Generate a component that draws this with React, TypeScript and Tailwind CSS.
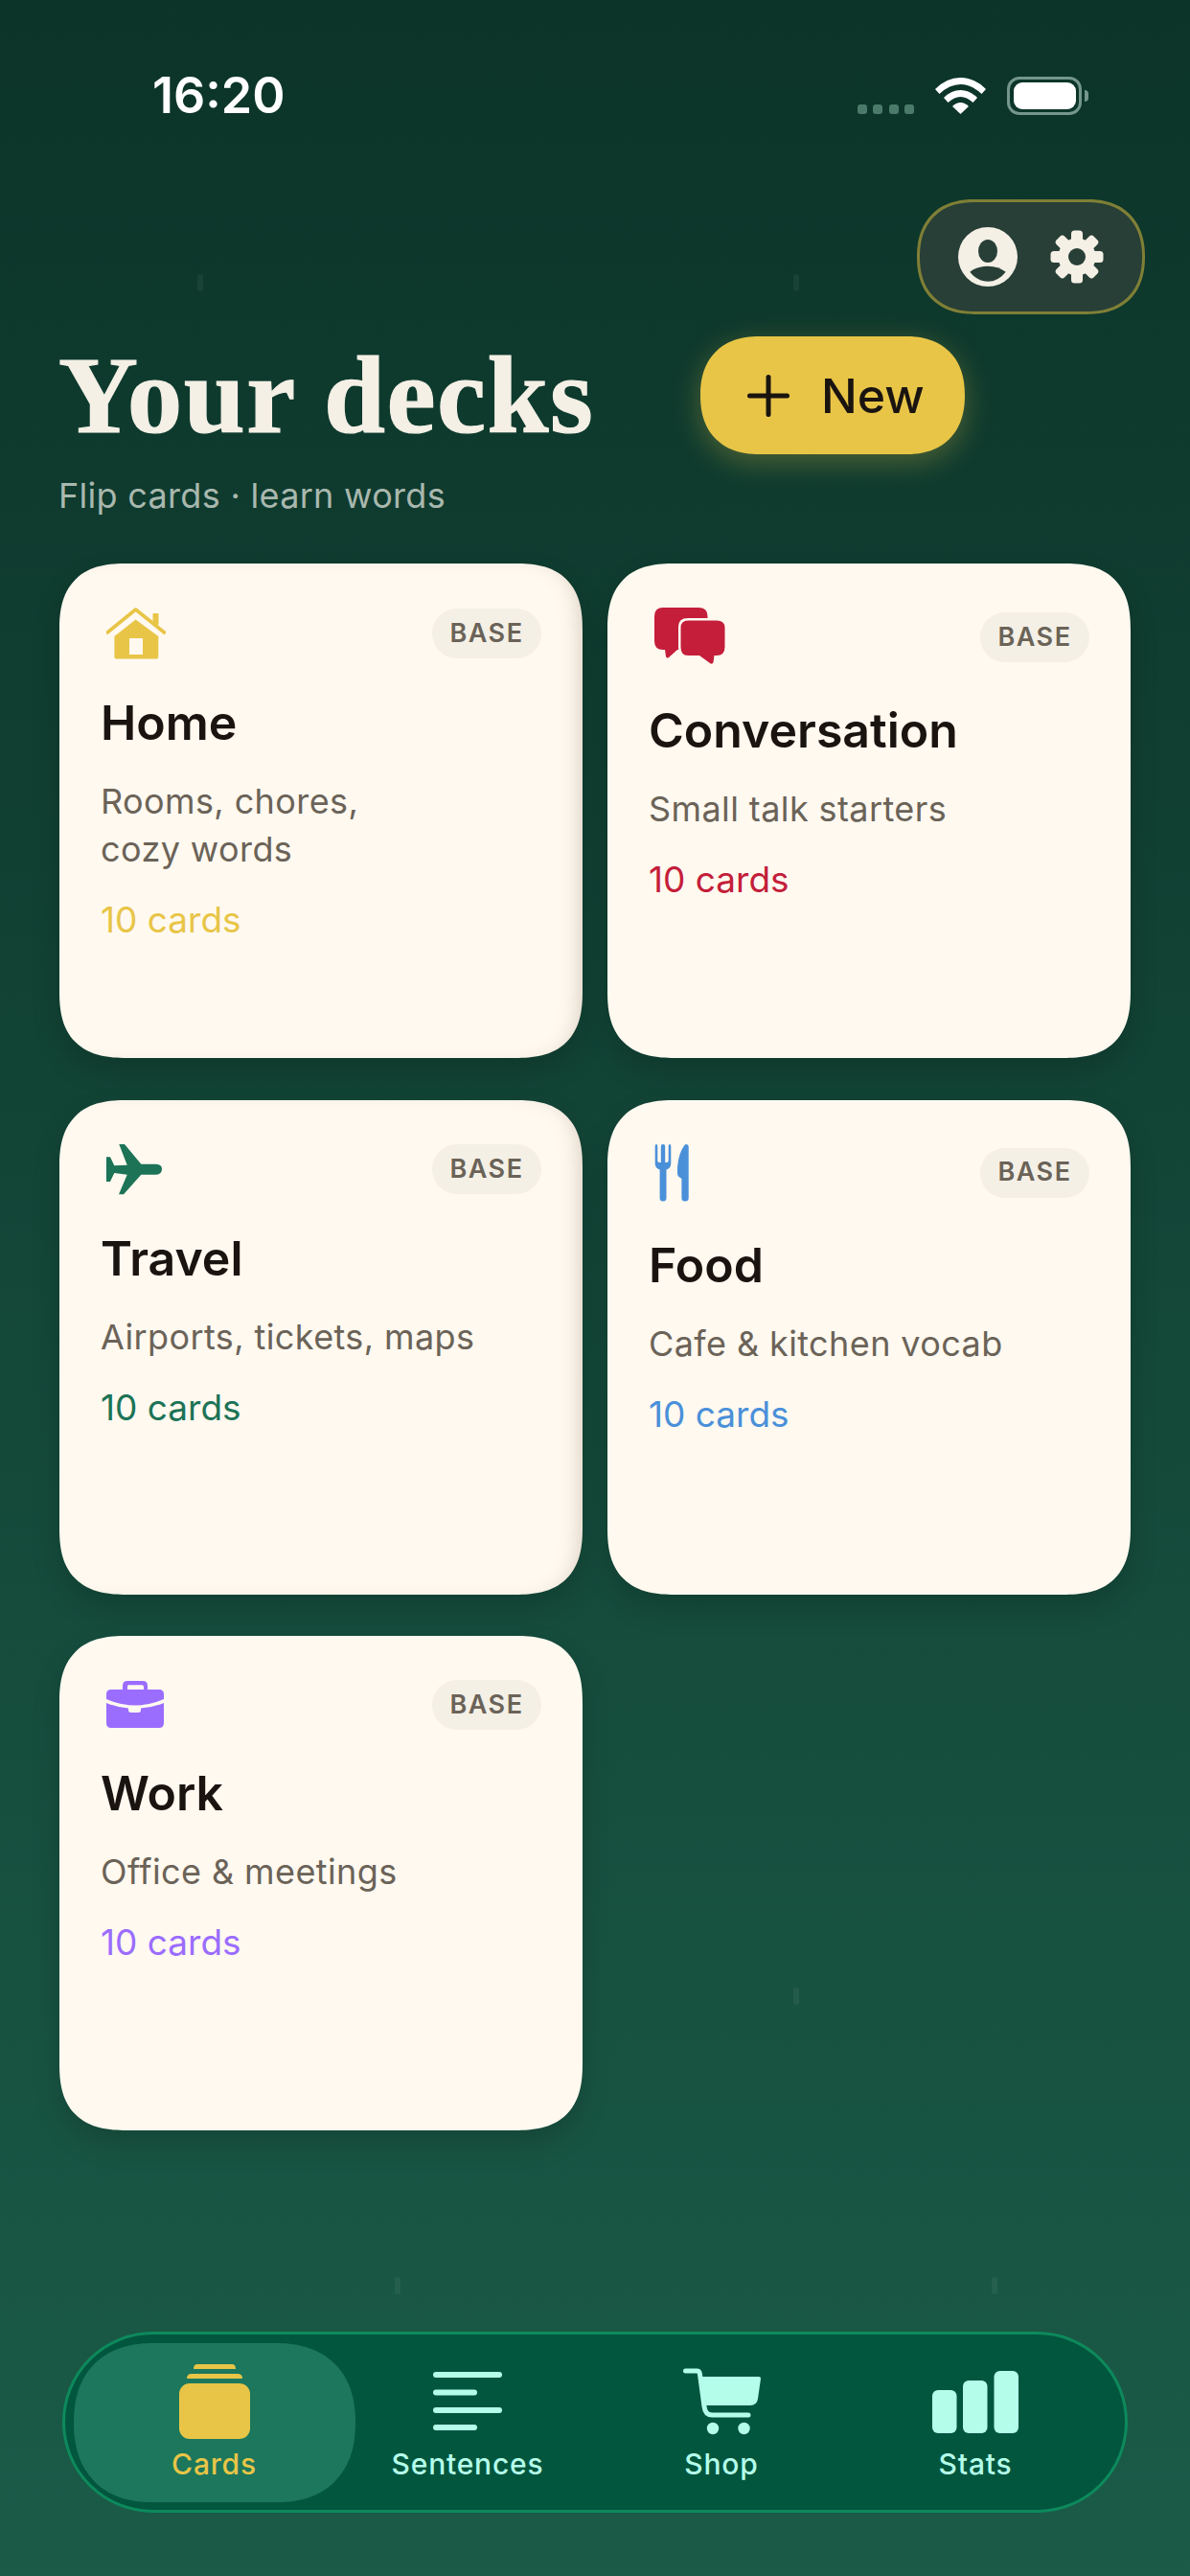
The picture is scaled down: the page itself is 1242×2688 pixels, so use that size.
import React from 'react';

const HomeIcon = () => (
  <svg width="62" height="54" viewBox="0 0 62 54" fill="#e8c547">
    <path d="M1 26 L30.6 2 L60.5 26" fill="none" stroke="#e8c547" strokeWidth="3.6" strokeLinecap="round" strokeLinejoin="round" />
    <rect x="48.5" y="6" width="6" height="12" rx="1" />
    <path fillRule="evenodd" d="M30.6 12.5 L54.3 30 V51 Q54.3 53.6 51.5 53.6 H11 Q8.4 53.6 8.4 51 V30 Z M24 32 V49 H38 V32 Z" />
  </svg>
);

const ChatIcon = () => (
  <svg width="74" height="62" viewBox="0 0 74 62" fill="#c41e3a">
    <path d="M9 0 H46 Q55.5 0 55.5 9 V36 Q55.5 44 47 44 H24 L15 52 Q13 53.5 12 51 L11 44 H9 Q0 44 0 35 V9 Q0 0 9 0 Z" />
    <path d="M35 11 H65 Q76 11 76 20 V41 Q76 52 65 52 H62 L60 60 L47 52 H35 Q25 52 25 41 V20 Q25 11 35 11 Z" fill="#fff9f0" />
    <path d="M35 13.5 H65 Q73.5 13.5 73.5 21 V41 Q73.5 50 65 50 H62.5 L61.5 57 Q60.5 60 58 58 L47 50 H35 Q27.5 50 27.5 41 V21 Q27.5 13.5 35 13.5 Z" />
  </svg>
);

const PlaneIcon = () => (
  <svg width="58" height="53" viewBox="0 0 58 53" fill="#1c7356">
    <path d="M13.3 0 H19 L36.3 20.7 H52 Q58 21 58 26 Q58 31.4 52 31.7 H36.3 L18 52.3 H13 L21.7 31.7 L8.3 30 L4 39 H0 V13.3 H4 L8.3 22.3 L21.7 21.7 Z" />
  </svg>
);

const FoodIcon = () => (
  <svg width="36" height="60" viewBox="0 0 36 60" fill="#4a90d9">
    <path d="M0.7 2 Q0.7 0 2 0 Q3.3 0 3.3 2 V17 Q3.3 19 5 19 H6.8 V2 Q6.8 0 9 0 Q11.2 0 11.2 2 V19 H13 Q14.7 19 14.7 17 V2 Q14.7 0 16 0 Q17.3 0 17.3 2 V20 Q17.3 25 12.5 26.5 V56 Q12.5 59.5 9 59.5 Q5.6 59.5 5.6 56 V26.5 Q0.7 25 0.7 20 Z" />
    <path d="M33 0 Q35.7 0 35.7 3 V56 Q35.7 59.5 32 59.5 Q28.4 59.5 28.4 56 V36 L25 33.5 Q24 32.5 24 30 V24 Q25 10 31 1.5 Q32 0 33 0 Z" />
  </svg>
);

const WorkIcon = () => (
  <svg width="60" height="50" viewBox="0 0 60 50" fill="#9b6dff">
    <path fillRule="evenodd" d="M22 0 H38 Q43 0 43 5 V9 H39 V6 Q39 4.3 37 4.3 H23 Q22 4.3 22 6 V9 H17 V5 Q17 0 22 0 Z" />
    <path d="M5 9 H55 Q60 9 60 14 V19 Q45 25.5 30 25.5 Q15 25.5 0 19 V14 Q0 9 5 9 Z" />
    <path d="M0 23 Q11 27.5 23 28.5 V30.5 Q23 33 26 33 H33 Q36 33 36 30.5 V28.5 Q49 27.5 60 23 V44 Q60 49 55 49 H5 Q0 49 0 44 Z" />
  </svg>
);

const ProfileIcon = () => (
  <svg width="62" height="62" viewBox="0 0 62 62">
    <circle cx="31" cy="31" r="31" fill="#f4f0e6" />
    <ellipse cx="31" cy="25" rx="10" ry="12" fill="#283f37" />
    <path d="M12.3 46.7 Q20 40.7 31 40.7 Q42 40.7 49.7 46.7 Q42 56.7 31 56.7 Q20 56.7 12.3 46.7 Z" fill="#283f37" />
  </svg>
);

const GearIcon = () => (
  <svg width="56" height="56" viewBox="0 0 56 56">
    {[0, 45, 90, 135].map((a) => (
      <rect key={a} x="22" y="0.5" width="12" height="55" rx="3.5" fill="#f4f0e6" transform={`rotate(${a} 28 28)`} />
    ))}
    <circle cx="28" cy="28" r="19.5" fill="#f4f0e6" />
    <circle cx="28" cy="28" r="9" fill="#283f37" />
  </svg>
);

const WifiIcon = () => (
  <svg width="53" height="38" viewBox="0 0 53 38" fill="#fff">
    <path d="M0 12 Q12 0 26.5 0 Q41 0 53 12 L48.5 17 Q38 7 26.5 7 Q15 7 4.5 17 Z" />
    <path d="M9 21 Q17 13 26.5 13 Q36 13 44 21 L39.5 26 Q33 20 26.5 20 Q20 20 13.5 26 Z" />
    <path d="M18 30 Q22 26 26.5 26 Q31 26 35 30 L26.5 38 Z" />
  </svg>
);

const CardsTabIcon = () => (
  <svg width="74" height="78" viewBox="0 0 74 78" fill="#e8c547">
    <path d="M15 5 Q15 0 19 0 H55 Q59 0 59 5 Z" />
    <path d="M8 15 Q8 10 13 10 H61 Q66 10 66 15 Z" />
    <rect x="0" y="20" width="74" height="58" rx="11" />
  </svg>
);

const SentencesTabIcon = () => (
  <svg width="72" height="62" viewBox="0 0 72 62" fill="#b4fdea">
    <rect x="0" y="0" width="72" height="6" rx="3" />
    <rect x="0" y="18.5" width="46" height="6" rx="3" />
    <rect x="0" y="37" width="72" height="6" rx="3" />
    <rect x="0" y="55" width="46" height="6" rx="3" />
  </svg>
);

const ShopTabIcon = () => (
  <svg width="81" height="70" viewBox="0 0 81 70" fill="#b4fdea">
    <path d="M2.5 3 H14 Q17 3 17.4 6 L22 40 Q23 49 30 49 H68" fill="none" stroke="#b4fdea" strokeWidth="5" strokeLinecap="round" />
    <path d="M19 9 H79 Q81 9 81 11 L78 32 Q77 39 70 39 H24 Z" />
    <circle cx="31" cy="63" r="6.2" />
    <circle cx="63.5" cy="63" r="6.2" />
  </svg>
);

const StatsTabIcon = () => (
  <svg width="90" height="65" viewBox="0 0 90 65" fill="#b4fdea">
    <rect x="0" y="20" width="25.5" height="45" rx="6" />
    <rect x="32" y="10" width="25.5" height="55" rx="6" />
    <rect x="64.5" y="0" width="25.5" height="65" rx="6" />
  </svg>
);

interface Deck {
  title: string;
  desc: string[];
  icon: React.ReactNode;
  countClass: string;
  shaded?: boolean;
}

const decks: Deck[] = [
  { title: 'Home', desc: ['Rooms, chores,', 'cozy words'], icon: <HomeIcon />, countClass: 'text-[#e8c547]', shaded: true },
  { title: 'Conversation', desc: ['Small talk starters'], icon: <ChatIcon />, countClass: 'text-[#c41e3a]' },
  { title: 'Travel', desc: ['Airports, tickets, maps'], icon: <PlaneIcon />, countClass: 'text-[#1c7356]', shaded: true },
  { title: 'Food', desc: ['Cafe & kitchen vocab'], icon: <FoodIcon />, countClass: 'text-[#4a90d9]' },
  { title: 'Work', desc: ['Office & meetings'], icon: <WorkIcon />, countClass: 'text-[#9b6dff]' },
];

// faint marks on the backdrop
const specks = [
  'left-[206px] top-[286px]',
  'left-[828px] top-[286px]',
  'left-[828px] top-[2074px]',
  'left-[412px] top-[2376px]',
  'left-[1035px] top-[2376px]',
];

const DeckCard: React.FC<{ deck: Deck }> = ({ deck }) => (
  <div
    className={`h-[516px] rounded-[70px] bg-[#fff9f0] pt-[46px] pr-[43px] pl-[43px] [corner-shape:superellipse(1.35)] ${
      deck.shaded
        ? 'shadow-[inset_-14px_0_22px_-12px_rgba(110,90,60,0.28),0_14px_30px_rgba(0,0,0,0.16)]'
        : 'shadow-[0_14px_30px_rgba(0,0,0,0.16)]'
    }`}
  >
    <div className="flex items-center justify-between">
      <div className="ml-[6px]">{deck.icon}</div>
      <span className="flex h-[52px] w-[114px] items-center justify-center rounded-full bg-[#f4f0e6] text-[27px] font-semibold tracking-[1.5px] text-[#6b6358]">
        BASE
      </span>
    </div>
    <h2 className="mt-[36px] text-[50px] leading-[60px] font-semibold text-[#1a1410]">{deck.title}</h2>
    <p className="mt-[27px] text-[36px] leading-[50px] tracking-[0.4px] text-[#6b6358]">
      {deck.desc.map((line) => (
        <span key={line} className="block">{line}</span>
      ))}
    </p>
    <p className={`mt-[26px] text-[37px] leading-[46px] ${deck.countClass}`}>10 cards</p>
  </div>
);

export default function App() {
  return (
    <div className="relative flex h-[2688px] w-[1242px] flex-col overflow-hidden bg-gradient-to-b from-[#0c3429] to-[#1b5b48] font-['Inter',sans-serif]">
      {specks.map((pos) => (
        <span key={pos} className={`absolute h-[18px] w-[6px] rounded-full bg-white/5 ${pos}`} />
      ))}

      {/* Status bar */}
      <div className="flex h-[208px] items-start justify-between pt-[71px] pr-[106px] pl-[159px]">
        <span className="text-[52px] leading-[58px] font-semibold text-white">16:20</span>
        <div className="flex items-start pt-[9px]">
          <div className="mt-[29px] flex gap-[6.5px]">
            <span className="size-[10px] rounded-[3px] bg-[#4b7a6b]" />
            <span className="size-[10px] rounded-[3px] bg-[#4b7a6b]" />
            <span className="size-[10px] rounded-[3px] bg-[#4b7a6b]" />
            <span className="size-[10px] rounded-[3px] bg-[#4b7a6b]" />
          </div>
          <div className="mt-[1px] ml-[22px]"><WifiIcon /></div>
          <div className="ml-[22px] flex items-center">
            <div className="flex h-[40px] w-[78px] items-center justify-center rounded-[13px] border-[3.5px] border-[#74968b]">
              <div className="h-[28px] w-[65px] rounded-[9px] bg-white" />
            </div>
            <div className="ml-[3px] h-[12px] w-[4px] rounded-r-full bg-[#74968b]" />
          </div>
        </div>
      </div>

      {/* Profile + settings */}
      <div className="flex justify-end pr-[47px]">
        <div className="flex h-[120px] w-[238px] items-center gap-[34px] rounded-[60px] border-[3px] border-[#7f7f36] bg-[#283f37] pl-[40px] [corner-shape:superellipse(1.2)]">
          <ProfileIcon />
          <GearIcon />
        </div>
      </div>

      {/* Heading */}
      <div className="mt-[23px] flex h-[123px] items-center pl-[61px]">
        <h1 className="w-[670px] font-['Liberation_Serif',serif] text-[115px] leading-[123px] font-bold tracking-[1.5px] text-[#f4f0e6] [-webkit-text-stroke:1.2px_#f4f0e6]">Your decks</h1>
        <button className="flex h-[123px] w-[276px] items-center gap-[33px] rounded-[62px] bg-[#e8c547] pl-[49px] text-[#1a1410] shadow-[0_8px_30px_rgba(232,197,71,0.3)] [corner-shape:superellipse(1.2)]">
          <svg width="44" height="44" viewBox="0 0 44 44" fill="none" stroke="#1a1410" strokeWidth="5" strokeLinecap="round">
            <path d="M22 2.5 V41.5 M2.5 22 H41.5" />
          </svg>
          <span className="text-[50px] leading-[56px] font-medium">New</span>
        </button>
      </div>
      <p className="mt-[21px] pl-[61px] text-[36px] leading-[44px] tracking-[0.3px] text-[#a9b8ae]">Flip cards · learn words</p>

      {/* Decks */}
      <div className="mt-[49px] grid grid-cols-[546px_546px] gap-x-[26px] gap-y-[43.5px] pl-[62px]">
        {decks.map((deck) => (
          <DeckCard key={deck.title} deck={deck} />
        ))}
      </div>

      {/* Bottom tabs */}
      <nav className="mt-auto mb-[66px] ml-[65px] flex h-[189px] w-[1112px] items-center rounded-[95px] border-[3px] border-[#0d8a5c] bg-[#03563e] pl-[24.5px]">
        <a className="-mr-[15px] -ml-[16px] flex h-[166px] w-[294px] flex-col items-center justify-center rounded-[83px] bg-[#1c775c] [corner-shape:superellipse(1.2)]">
          <div className="flex h-[80px] items-center"><CardsTabIcon /></div>
          <span className="mt-[7px] text-[30px] leading-[36px] font-medium tracking-[0.8px] text-[#e8c547]">Cards</span>
        </a>
        <a className="flex w-[265px] flex-col items-center">
          <div className="flex h-[80px] items-center"><SentencesTabIcon /></div>
          <span className="mt-[7px] text-[30px] leading-[36px] font-medium tracking-[0.8px] text-[#b4fdea]">Sentences</span>
        </a>
        <a className="flex w-[265px] flex-col items-center">
          <div className="flex h-[80px] items-center"><ShopTabIcon /></div>
          <span className="mt-[7px] text-[30px] leading-[36px] font-medium tracking-[0.8px] text-[#b4fdea]">Shop</span>
        </a>
        <a className="flex w-[265px] flex-col items-center">
          <div className="flex h-[80px] items-center"><StatsTabIcon /></div>
          <span className="mt-[7px] text-[30px] leading-[36px] font-medium tracking-[0.8px] text-[#b4fdea]">Stats</span>
        </a>
      </nav>
    </div>
  );
}
